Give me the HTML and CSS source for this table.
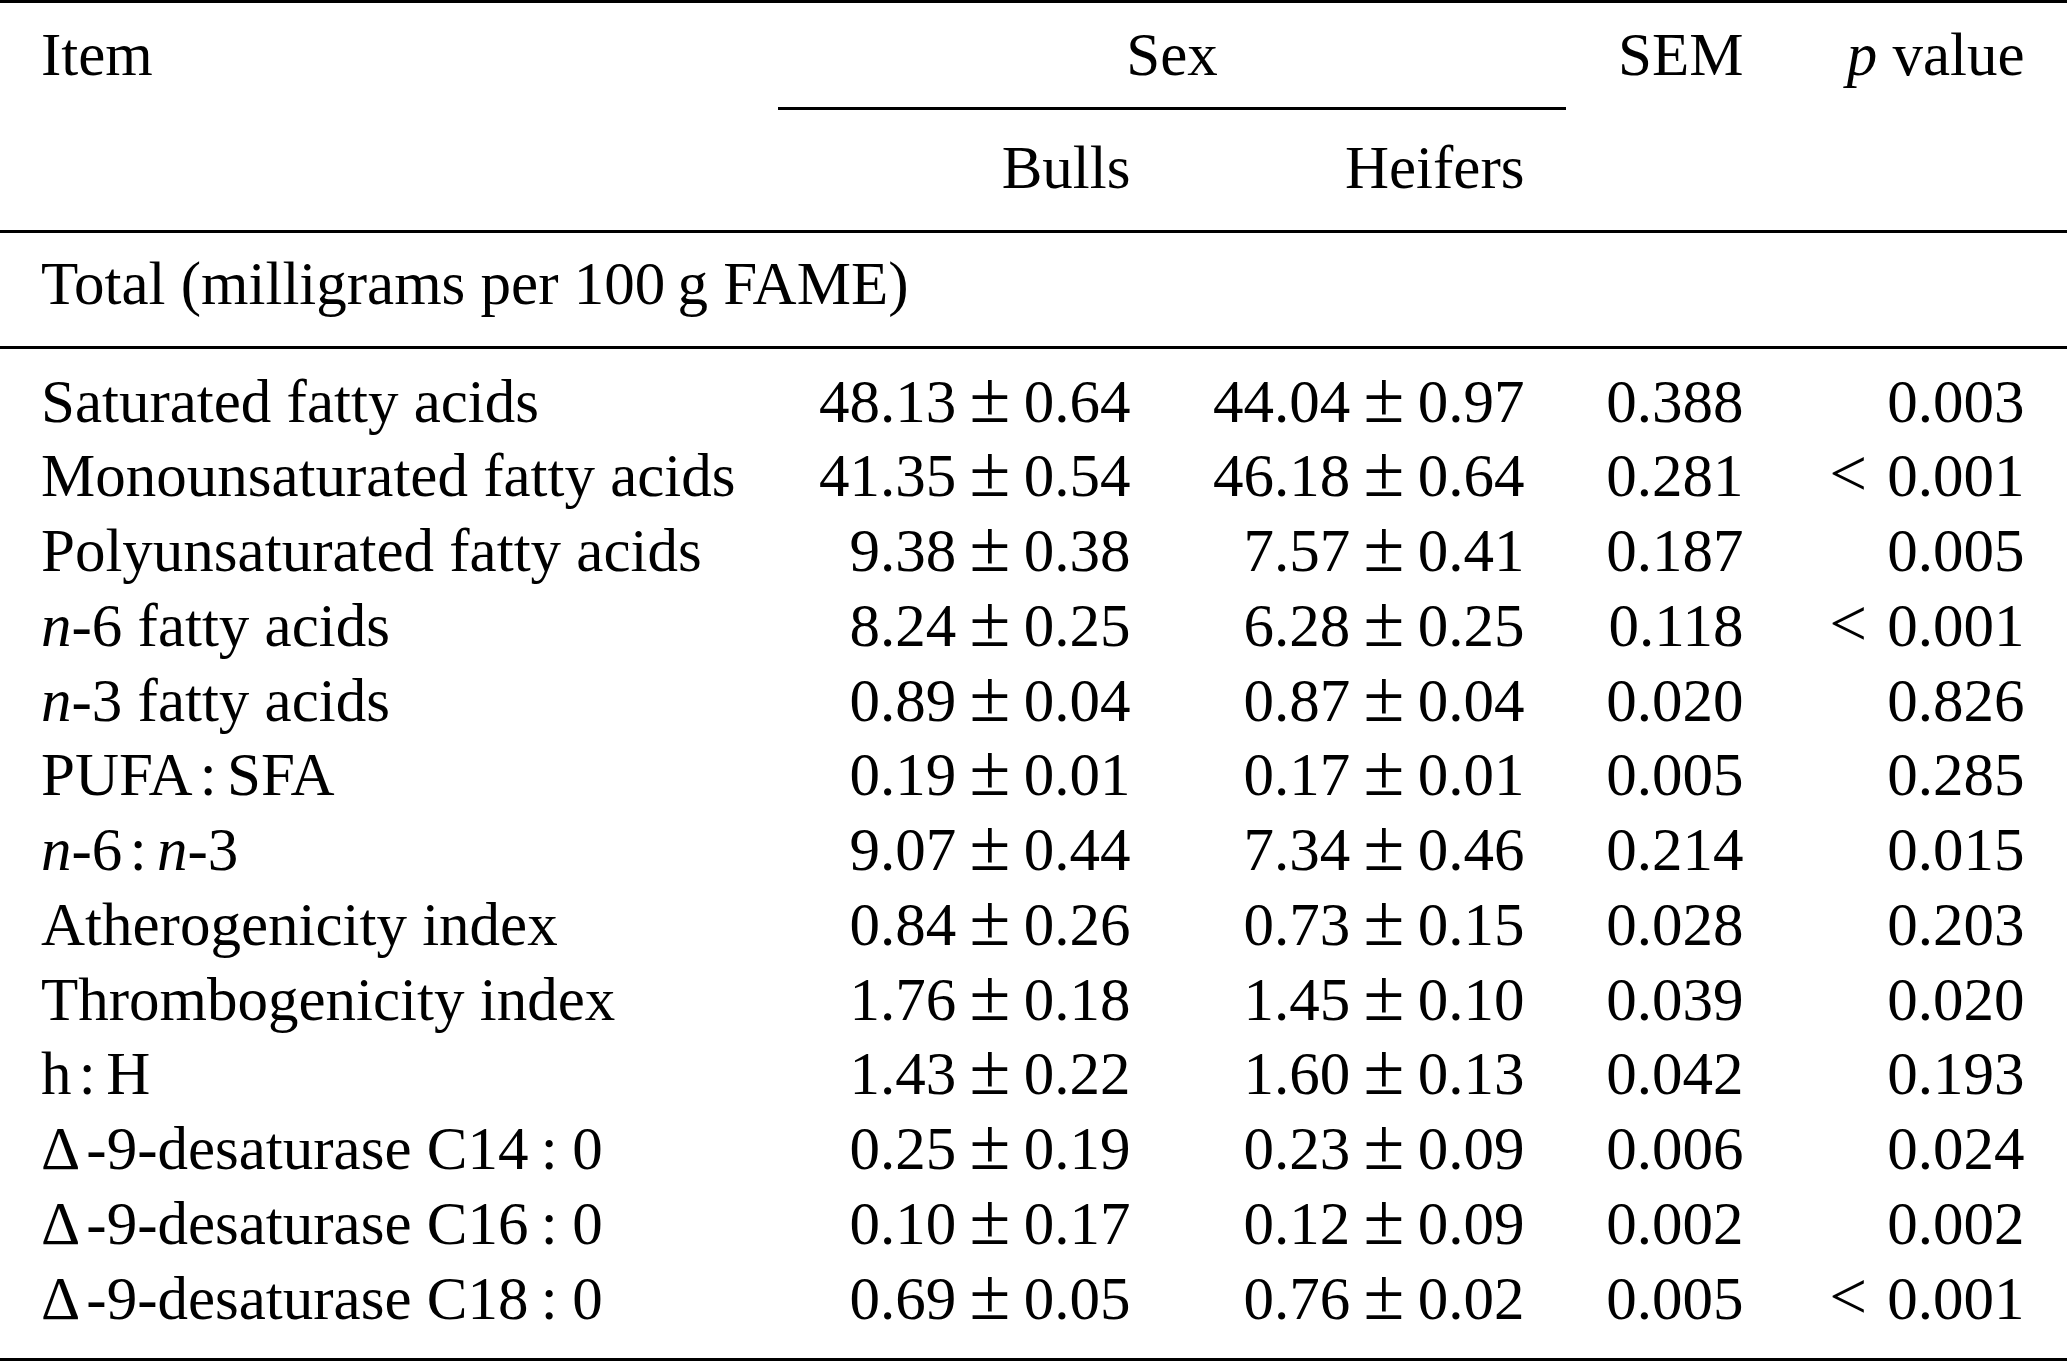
FILE: index.html
```html
<!DOCTYPE html>
<html lang="en">
<head>
<meta charset="utf-8">
<title>Fatty acid table</title>
<link rel="stylesheet" href="styles.css">
</head>
<body>
<table class="tbl">
  <colgroup>
    <col class="c-item">
    <col class="c-val">
    <col class="c-val">
    <col class="c-sem">
    <col class="c-p">
  </colgroup>
  <thead>
    <tr class="h1">
      <th class="item">Item</th>
      <th class="sex" colspan="2">Sex</th>
      <th class="num">SEM</th>
      <th class="num last"><i>p</i> value</th>
    </tr>
    <tr class="h2">
      <th class="item"></th>
      <th class="num">Bulls</th>
      <th class="num">Heifers</th>
      <th class="num"></th>
      <th class="num last"></th>
    </tr>
    <tr class="h3">
      <th class="item" colspan="5">Total (milligrams per 100&#8201;g FAME)</th>
    </tr>
  </thead>
  <tbody>
    <tr class="first">
      <td class="item">Saturated fatty acids</td>
      <td class="num">48.13<span class="pm">±</span>0.64</td>
      <td class="num">44.04<span class="pm">±</span>0.97</td>
      <td class="num">0.388</td>
      <td class="num last">0.003</td>
    </tr>
    <tr>
      <td class="item">Monounsaturated fatty acids</td>
      <td class="num">41.35<span class="pm">±</span>0.54</td>
      <td class="num">46.18<span class="pm">±</span>0.64</td>
      <td class="num">0.281</td>
      <td class="num last"><span class="lt">&lt;</span>0.001</td>
    </tr>
    <tr>
      <td class="item">Polyunsaturated fatty acids</td>
      <td class="num">9.38<span class="pm">±</span>0.38</td>
      <td class="num">7.57<span class="pm">±</span>0.41</td>
      <td class="num">0.187</td>
      <td class="num last">0.005</td>
    </tr>
    <tr>
      <td class="item"><i>n</i>-6 fatty acids</td>
      <td class="num">8.24<span class="pm">±</span>0.25</td>
      <td class="num">6.28<span class="pm">±</span>0.25</td>
      <td class="num">0.118</td>
      <td class="num last"><span class="lt">&lt;</span>0.001</td>
    </tr>
    <tr>
      <td class="item"><i>n</i>-3 fatty acids</td>
      <td class="num">0.89<span class="pm">±</span>0.04</td>
      <td class="num">0.87<span class="pm">±</span>0.04</td>
      <td class="num">0.020</td>
      <td class="num last">0.826</td>
    </tr>
    <tr>
      <td class="item">PUFA<span class="colon">:</span>SFA</td>
      <td class="num">0.19<span class="pm">±</span>0.01</td>
      <td class="num">0.17<span class="pm">±</span>0.01</td>
      <td class="num">0.005</td>
      <td class="num last">0.285</td>
    </tr>
    <tr>
      <td class="item"><i>n</i>-6<span class="colon">:</span><i>n</i>-3</td>
      <td class="num">9.07<span class="pm">±</span>0.44</td>
      <td class="num">7.34<span class="pm">±</span>0.46</td>
      <td class="num">0.214</td>
      <td class="num last">0.015</td>
    </tr>
    <tr>
      <td class="item">Atherogenicity index</td>
      <td class="num">0.84<span class="pm">±</span>0.26</td>
      <td class="num">0.73<span class="pm">±</span>0.15</td>
      <td class="num">0.028</td>
      <td class="num last">0.203</td>
    </tr>
    <tr>
      <td class="item">Thrombogenicity index</td>
      <td class="num">1.76<span class="pm">±</span>0.18</td>
      <td class="num">1.45<span class="pm">±</span>0.10</td>
      <td class="num">0.039</td>
      <td class="num last">0.020</td>
    </tr>
    <tr>
      <td class="item">h<span class="colon">:</span>H</td>
      <td class="num">1.43<span class="pm">±</span>0.22</td>
      <td class="num">1.60<span class="pm">±</span>0.13</td>
      <td class="num">0.042</td>
      <td class="num last">0.193</td>
    </tr>
    <tr>
      <td class="item"><span class="delta">Δ</span>-9-desaturase C14<span class="colon wide">:</span>0</td>
      <td class="num">0.25<span class="pm">±</span>0.19</td>
      <td class="num">0.23<span class="pm">±</span>0.09</td>
      <td class="num">0.006</td>
      <td class="num last">0.024</td>
    </tr>
    <tr>
      <td class="item"><span class="delta">Δ</span>-9-desaturase C16<span class="colon wide">:</span>0</td>
      <td class="num">0.10<span class="pm">±</span>0.17</td>
      <td class="num">0.12<span class="pm">±</span>0.09</td>
      <td class="num">0.002</td>
      <td class="num last">0.002</td>
    </tr>
    <tr class="final">
      <td class="item"><span class="delta">Δ</span>-9-desaturase C18<span class="colon wide">:</span>0</td>
      <td class="num">0.69<span class="pm">±</span>0.05</td>
      <td class="num">0.76<span class="pm">±</span>0.02</td>
      <td class="num">0.005</td>
      <td class="num last"><span class="lt">&lt;</span>0.001</td>
    </tr>
  </tbody>
</table>
</body>
</html>
```
FILE: styles.css
```css
html, body {
  margin: 0;
  padding: 0;
  background: #ffffff;
}

body {
  width: 2067px;
  height: 1362px;
  overflow: hidden;
  color: #000000;
  font-family: "Liberation Serif", "Times New Roman", serif;
  font-size: 61px;
}

.tbl {
  width: 2067px;
  table-layout: fixed;
  border-collapse: separate;
  border-spacing: 0;
  border-top: 3px solid #000;
  border-bottom: 3px solid #000;
}

.c-item { width: 778px; }
.c-val { width: 394px; }
.c-sem { width: 219px; }
.c-p { width: 282px; }

.tbl th,
.tbl td {
  font-weight: normal;
  line-height: 74.75px;
  padding: 0 41.5px 0 0;
  vertical-align: top;
  white-space: nowrap;
  text-align: right;
}

.tbl .item {
  text-align: left;
  padding-left: 41px;
  padding-right: 0;
}

.tbl .last {
  padding-right: 42.5px;
}

.tbl .sex {
  text-align: center;
  padding-right: 0;
  border-bottom: 3px solid #000;
}

.h1 th {
  padding-top: 15px;
  padding-bottom: 14.25px;
}

.h2 th {
  padding-top: 21px;
  padding-bottom: 24.3px;
  border-bottom: 3px solid #000;
}

.h3 th {
  padding-top: 14px;
  padding-bottom: 24.25px;
  border-bottom: 3px solid #000;
}

.first td {
  padding-top: 15.7px;
}

.final td {
  padding-bottom: 21.5px;
}

i {
  font-style: italic;
}

.pm {
  font-size: 1.22em;
  line-height: 0;
  margin: 0 0.18em;
}

.lt {
  font-size: 1.1em;
  line-height: 0;
  margin-right: 0.3em;
}

.colon {
  margin: 0 0.17em 0 0.12em;
}

.colon.wide {
  margin: 0 0.24em 0 0.2em;
}

.delta {
  margin-right: 0.1em;
}
```
